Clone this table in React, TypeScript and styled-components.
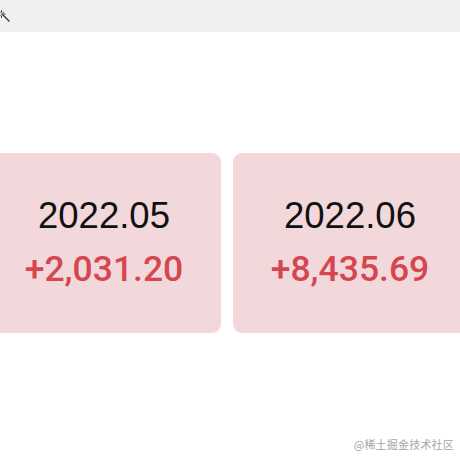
import React from "react";
import styled, { createGlobalStyle } from "styled-components";

const Global = createGlobalStyle`
  html, body { margin: 0; padding: 0; background: #ffffff; }
  body { width: 460px; height: 460px; overflow: hidden; font-family: "Liberation Sans", Arial, sans-serif; }
`;

const Page = styled.div`
  position: relative;
  width: 460px;
  height: 460px;
  overflow: hidden;
  background: #ffffff;
`;

const TopBar = styled.div`
  height: 32px;
  background: #f0f0f0;
  display: flex;
  align-items: center;
`;

const Row = styled.div`
  display: flex;
  gap: 12px;
  margin-top: 121px;
  margin-left: -13px;
`;

const Card = styled.div`
  flex: 0 0 234px;
  height: 180px;
  border-radius: 9px;
  background: #f3d8db;
  display: flex;
  flex-direction: column;
  align-items: center;
  justify-content: center;
  gap: 11px;
  padding-bottom: 2px;
  box-sizing: border-box;
`;

const DateText = styled.div`
  font-family: "Liberation Sans", Arial, sans-serif;
  font-size: 36.5px;
  line-height: 43px;
  color: #111111;
`;

const Amount = styled.div`
  font-family: Roboto, "Liberation Sans", sans-serif;
  font-weight: 500;
  font-size: 35.5px;
  line-height: 43px;
  color: #d5464f;
`;

const Watermark = styled.div`
  position: absolute;
  right: 6px;
  bottom: 8px;
  font-family: "Noto Sans CJK SC", sans-serif;
  font-size: 11px;
  color: #a6a6a6;
  letter-spacing: 0.2px;
`;

const Wand = () => (
  <svg width="14" height="14" viewBox="0 0 14 14" style={{ marginLeft: -2, marginTop: 1 }}>
    <g stroke="#333" strokeWidth="1" fill="none" strokeLinecap="round">
      <line x1="4" y1="4" x2="11" y2="11" strokeWidth="1.4" />
      <line x1="3.5" y1="0.5" x2="3.5" y2="2" />
      <line x1="3.5" y1="6" x2="3.5" y2="7.5" />
      <line x1="0" y1="4" x2="1.5" y2="4" />
      <line x1="5.5" y1="4" x2="7" y2="4" />
      <line x1="1.5" y1="2" x2="2.3" y2="2.8" />
      <line x1="5.5" y1="2" x2="4.7" y2="2.8" />
      <line x1="1.5" y1="6" x2="2.3" y2="5.2" />
    </g>
  </svg>
);

const items = [
  { date: "2022.05", amount: "+2,031.20" },
  { date: "2022.06", amount: "+8,435.69" },
];

export default function App() {
  return (
    <Page>
      <Global />
      <TopBar>
        <Wand />
      </TopBar>
      <Row>
        {items.map((it) => (
          <Card key={it.date}>
            <DateText>{it.date}</DateText>
            <Amount>{it.amount}</Amount>
          </Card>
        ))}
      </Row>
      <Watermark>@稀土掘金技术社区</Watermark>
    </Page>
  );
}
